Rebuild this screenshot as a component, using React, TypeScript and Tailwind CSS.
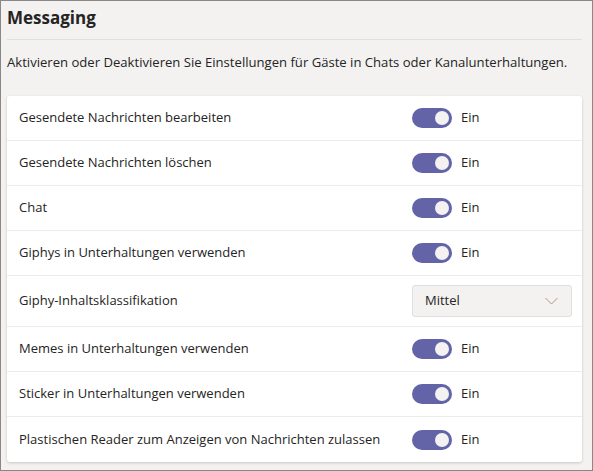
const rows: { label: string; kind: "toggle" | "select"; value: string }[] = [
  { label: "Gesendete Nachrichten bearbeiten", kind: "toggle", value: "Ein" },
  { label: "Gesendete Nachrichten löschen", kind: "toggle", value: "Ein" },
  { label: "Chat", kind: "toggle", value: "Ein" },
  { label: "Giphys in Unterhaltungen verwenden", kind: "toggle", value: "Ein" },
  { label: "Giphy-Inhaltsklassifikation", kind: "select", value: "Mittel" },
  { label: "Memes in Unterhaltungen verwenden", kind: "toggle", value: "Ein" },
  { label: "Sticker in Unterhaltungen verwenden", kind: "toggle", value: "Ein" },
  { label: "Plastischen Reader zum Anzeigen von Nachrichten zulassen", kind: "toggle", value: "Ein" },
];

function Toggle({ value }: { value: string }) {
  return (
    <div className="flex items-center gap-[9px]">
      <div className="flex h-[20px] w-[40px] items-center justify-end rounded-full bg-[#6264a7] pr-[3px]">
        <div className="h-[14px] w-[14px] rounded-full bg-[#f3f2f1]" />
      </div>
      <span className="text-[13px] text-[#252423]">{value}</span>
    </div>
  );
}

function Select({ value }: { value: string }) {
  return (
    <div className="flex h-[32px] w-[160px] items-center justify-between rounded-[3px] border border-[#e1dfdd] bg-[#f3f2f1] pl-[12px] pr-[13px]">
      <span className="text-[13px] text-[#252423]">{value}</span>
      <svg width="13" height="8" viewBox="0 0 13 8" fill="none">
        <path d="M0.5 1l6 6 6-6" stroke="#b88f84" strokeWidth="1" />
      </svg>
    </div>
  );
}

export default function App() {
  return (
    <div
      className="h-[471px] w-[593px] border border-[#8a8886] bg-[#f3f2f1] pl-[6px] pr-[10px] text-[#252423]"
      style={{ fontFamily: '"Segoe UI", "Open Sans", "Noto Sans", sans-serif' }}
    >
      <div className="flex h-[39px] items-center border-b border-[#e1dfdd] pb-[6px]">
        <h1 className="text-[17px] font-bold leading-none">Messaging</h1>
      </div>
      <p className="pt-[12px] text-[13.1px] leading-[20px]">
        Aktivieren oder Deaktivieren Sie Einstellungen für Gäste in Chats oder Kanalunterhaltungen.
      </p>
      <div className="mt-[24px] rounded-[3px] bg-white shadow-[0_1px_3px_rgba(0,0,0,0.18)]">
        {rows.map((r, i) => (
          <div
            key={r.label}
            className={`flex items-center pl-[12px] ${r.kind === "select" ? "h-[51px]" : "h-[45px]"} ${
              i < rows.length - 1 ? "border-b border-[#edebe9]" : ""
            }`}
          >
            <span className="w-[393px] text-[13px]">{r.label}</span>
            {r.kind === "toggle" ? <Toggle value={r.value} /> : <Select value={r.value} />}
          </div>
        ))}
      </div>
    </div>
  );
}
